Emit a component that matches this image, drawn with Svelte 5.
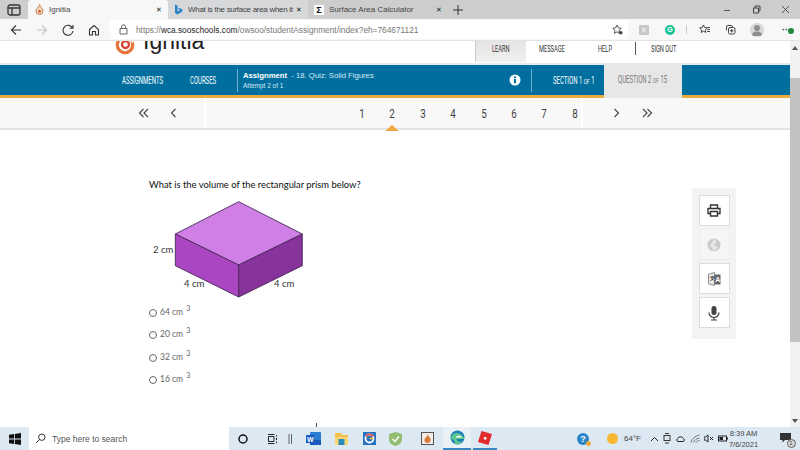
<script>
  const pages = [1, 2, 3, 4, 5, 6, 7, 8];
  const answers = ['64', '20', '32', '16'];
</script>

<div class="screen">
  <div class="tabbar">
    <div class="tabs-btn">
      <svg width="14" height="12" viewBox="0 0 14 12"><rect x="1" y="1" width="12" height="10" rx="2" fill="none" stroke="#333" stroke-width="1.3"/><path d="M1 4h12M5 4v7" stroke="#333" stroke-width="1.3"/></svg>
    </div>
    <div class="tab active">
      <svg width="9" height="11" viewBox="0 0 9 11"><path d="M4.500.5C5 3 8 4.500 8 7a3.500 3.500 0 0 1-7 0C1 5.500 2 5 2.500 3.500 3.500 4 4.500 2.500 4.500.5Z" fill="#f4d9c2" stroke="#c9844f" stroke-width="1"/><circle cx="4.500" cy="7.300" r="1.500" fill="#d9643a"/></svg>
      <span class="tab-title">Ignitia</span>
      <span class="close">✕</span>
    </div>
    <div class="tab second">
      <svg width="9" height="11" viewBox="0 0 9 11"><path d="M1 .5 3.500 1.500V7.500L6 6.300 4.700 5.500 4 3.700 8.300 5.200V7.500L3.500 10.500 1 9Z" fill="#2b83c6"/></svg>
      <span class="tab-title">What is the surface area when it</span>
      <span class="close">✕</span>
    </div>
    <div class="tab third">
      <span class="sigma">Σ</span>
      <span class="tab-title">Surface Area Calculator</span>
      <span class="close">✕</span>
    </div>
    <div class="plus">
      <svg width="10" height="10" viewBox="0 0 10 10"><path d="M5 0v10M0 5h10" stroke="#333" stroke-width="1"/></svg>
    </div>
    <div class="winctl">
      <svg width="8" height="8" viewBox="0 0 8 8"><path d="M1 4.500h6" stroke="#555"/></svg>
      <svg width="9" height="9" viewBox="0 0 9 9"><path d="M1.500 3h5v5h-5zM3 3V1h5v5H6.500" fill="none" stroke="#444"/></svg>
      <svg width="9" height="9" viewBox="0 0 9 9"><path d="M1 1l7 7M8 1l-7 7" stroke="#555"/></svg>
    </div>
  </div>

  <div class="toolbar">
    <div class="nav-icons">
      <svg width="12" height="12" viewBox="0 0 12 12"><path d="M11 6H1.500M6 1.500 1.500 6 6 10.500" fill="none" stroke="#333" stroke-width="1.100"/></svg>
      <svg width="12" height="12" viewBox="0 0 12 12"><path d="M1 6h9.500M6 1.500 10.500 6 6 10.500" fill="none" stroke="#c4c4c4" stroke-width="1.100"/></svg>
      <svg width="12" height="12" viewBox="0 0 12 12"><path d="M10.500 4A5 5 0 1 0 11 7M11 1v3.300H7.700" fill="none" stroke="#333" stroke-width="1.100"/></svg>
      <svg width="12" height="12" viewBox="0 0 12 12"><path d="M1.500 5.500 6 1.500l4.500 4V11H7.500V7.500h-3V11h-3Z" fill="none" stroke="#333" stroke-width="1.100"/></svg>
    </div>
    <div class="urlbox">
      <svg width="9" height="11" viewBox="0 0 9 11"><path d="M2.500 4V2.800a2 2 0 0 1 4 0V4M1 4.500h7v5.500H1z" fill="none" stroke="#666"/></svg>
      <span class="url">https://<b>wca.sooschools.com</b>/owsoo/studentAssignment/index?eh=764671121</span>
      <svg class="fav" width="11" height="11" viewBox="0 0 11 11"><path d="M5 1 6.300 3.800 9.300 4.200 7 6.300 7.600 9.300 5 7.800 2.400 9.300 3 6.300.8 4.200 3.700 3.800Z" fill="none" stroke="#444" stroke-width=".9"/><circle cx="8.800" cy="8.800" r="1.800" fill="#444"/></svg>
    </div>
    <div class="ext-icons">
      <span class="ext-k">k</span>
      <span class="ext-g">G</span>
      <span class="ext-sep"></span>
      <svg class="ext-star" width="11" height="11" viewBox="0 0 11 11"><path d="M4.500 1 5.700 3.600 8.300 4 6.400 5.800 6.900 8.500 4.500 7.100 2.100 8.500 2.600 5.800.7 4 3.300 3.600ZM8 3.500h3M8.500 5.500h2.500M8 7.500h3" fill="none" stroke="#333" stroke-width=".9"/></svg>
      <svg class="ext-coll" width="11" height="11" viewBox="0 0 11 11"><path d="M1.500 6.500V3A1.500 1.500 0 0 1 3 1.500h3A1.500 1.500 0 0 1 7.500 3M3.500 5a1.500 1.500 0 0 1 1.500-1.500h3.500A1.500 1.500 0 0 1 10 5v3.500A1.500 1.500 0 0 1 8.500 10H5A1.500 1.500 0 0 1 3.500 8.500ZM6.800 5v3.500M5 6.800h3.500" fill="none" stroke="#333" stroke-width=".9"/></svg>
      <span class="avatar">
        <svg width="14" height="14" viewBox="0 0 14 14"><circle cx="7" cy="5" r="3" fill="#8f8f8f"/><path d="M2 13c0-3.500 2-4.500 5-4.500s5 1 5 4.500Z" fill="#8f8f8f"/></svg>
      </span>
      <span class="more">···<i></i></span>
    </div>
  </div>

  <div class="page">
    <div class="content">
      <header class="top">
        <div class="logo">
          <svg width="20" height="20" viewBox="0 0 22 22"><circle cx="11" cy="11" r="8.500" fill="none" stroke="#e9743a" stroke-width="3.500"/><circle cx="11.500" cy="10.500" r="3.800" fill="none" stroke="#d9432f" stroke-width="2.500"/><path d="M13 4 20 2 20 9Z" fill="#fff"/></svg>
          <span>Ignitia</span>
        </div>
        <nav class="menu">
          <span class="learn"><span class="narrow">LEARN</span></span>
          <span class="narrow message">MESSAGE</span>
          <span class="narrow help">HELP</span>
          <span class="menu-sep"></span>
          <span class="narrow signout">SIGN OUT</span>
        </nav>
      </header>

      <div class="band">
        <div class="band-blue">
          <span class="narrow courses-a">ASSIGNMENTS</span>
          <span class="narrow courses-b">COURSES</span>
          <span class="band-sep first"></span>
          <div class="assign">
            <div class="assign-title"><b>Assignment</b>&nbsp; - 18. Quiz: Solid Figures</div>
            <div class="attempt">Attempt 2 of 1</div>
          </div>
          <svg class="info" width="12" height="12" viewBox="0 0 12 12"><circle cx="6" cy="6" r="5.500" fill="#fff"/><rect x="5" y="5" width="2" height="4.200" fill="#006fa0"/><rect x="5" y="2.500" width="2" height="1.600" fill="#006fa0"/></svg>
          <span class="band-sep second"></span>
          <span class="narrow section">SECTION 1 <small>OF</small> 1</span>
        </div>
        <div class="question"><span class="narrow">QUESTION 2 <small>OF</small> 15</span></div>
        <div class="band-end"></div>
      </div>

      <div class="pager">
        <div class="seg left">
          <svg width="12" height="10" viewBox="0 0 12 10"><path d="M5.500 1 1.500 5l4 4M10 1 6 5l4 4" fill="none" stroke="#444" stroke-width="1.100"/></svg>
          <svg width="7" height="10" viewBox="0 0 7 10"><path d="M5.500 1 1.500 5l4 4" fill="none" stroke="#444" stroke-width="1.100"/></svg>
        </div>
        <div class="seg middle">
          {#each pages as p}
            <span class="num narrow" class:current={p === 2}>{p}</span>
          {/each}
        </div>
        <div class="seg right">
          <svg width="7" height="10" viewBox="0 0 7 10"><path d="M1.500 1l4 4-4 4" fill="none" stroke="#444" stroke-width="1.100"/></svg>
          <svg width="12" height="10" viewBox="0 0 12 10"><path d="M2 1l4 4-4 4M6.500 1l4 4-4 4" fill="none" stroke="#444" stroke-width="1.100"/></svg>
        </div>
      </div>

      <div class="body">
        <main class="quiz">
          <p class="prompt">What is the volume of the rectangular prism below?</p>
          <svg class="prism" width="170" height="104" viewBox="150 197 170 104">
            <path d="M238.700 201.700 302.300 234 238.700 265 175.300 234Z" fill="#cf7fe6" stroke="#4a2a5a" stroke-width=".9"/>
            <path d="M175.300 234 238.700 265V297L175.300 265.700Z" fill="#ab46c2" stroke="#4a2a5a" stroke-width=".9"/>
            <path d="M238.700 265 302.300 234V265.700L238.700 297Z" fill="#87339b" stroke="#4a2a5a" stroke-width=".9"/>
            <text x="153" y="253">2 cm</text>
            <text x="184" y="287">4 cm</text>
            <text x="274" y="287">4 cm</text>
          </svg>
          <ul class="answers">
            {#each answers as a}
              <li><span class="radio"></span><span>{a} cm <sup>3</sup></span></li>
            {/each}
          </ul>
        </main>
        <aside class="tools">
          <div class="tool">
            <svg width="14" height="13" viewBox="0 0 14 13"><path d="M3.500 4V1h7v3M3.500 9.500H1V4.500h12v5h-2.500M3.500 7.500h7V12h-7Z" fill="#fff" stroke="#333" stroke-width="1.400"/></svg>
          </div>
          <div class="tool off">
            <svg width="14" height="14" viewBox="0 0 14 14"><circle cx="7" cy="7" r="6.500" fill="#c9c9c9"/><path d="M7 1c2 1 3 2 2.500 3.500S7 5.500 7.500 7s3 1 3.500 2.500C9 12 7 13 6 13 6 10 4 9 3 8 4 6 5 4 7 1Z" fill="#e6e6e6"/></svg>
          </div>
          <div class="tool">
            <svg width="13" height="16" viewBox="0 0 13 16"><path d="M.5 3 6.500 1.500v13L.5 13Z" fill="#e6e6e6" stroke="#777" stroke-width=".8"/><path d="M6.500 3.500h6v10h-6Z" fill="#666"/><text x="7.300" y="11" class="glyph">A</text><text x="1.500" y="9" class="glyph dark">文</text></svg>
          </div>
          <div class="tool">
            <svg width="12" height="16" viewBox="0 0 12 16"><rect x="3.500" y="1" width="5" height="9" rx="2.500" fill="#444"/><path d="M1 7.500a5 5 0 0 0 10 0M6 12.500V15M3 15h6" fill="none" stroke="#444" stroke-width="1.200"/></svg>
          </div>
        </aside>
      </div>
      <span class="tick"></span>
    </div>
    <div class="scrollbar">
      <svg width="6" height="4" viewBox="0 0 6 4"><path d="M3 0 6 4H0Z" fill="#555"/></svg>
      <span class="thumb"></span>
      <svg class="down" width="6" height="4" viewBox="0 0 6 4"><path d="M0 0H6L3 4Z" fill="#555"/></svg>
    </div>
  </div>

  <footer class="taskbar">
    <div class="start">
      <svg width="12" height="12" viewBox="0 0 12 12"><path d="M0 1.800 5 1v4.600H0ZM5.800.9 12 0v5.600H5.800ZM0 6.400h5V11l-5-.8ZM5.800 6.400H12V12l-6.200-.9Z" fill="#111"/></svg>
    </div>
    <div class="search">
      <svg width="11" height="11" viewBox="0 0 11 11"><circle cx="6.800" cy="4.200" r="3.200" fill="none" stroke="#333"/><path d="M4.500 6.500 1 10" stroke="#333"/></svg>
      <span>Type here to search</span>
    </div>
    <div class="apps">
      <svg width="10" height="10" viewBox="0 0 10 10"><circle cx="5" cy="5" r="4" fill="none" stroke="#111" stroke-width="1.500"/></svg>
      <svg class="a-view" width="11" height="10" viewBox="0 0 11 10"><path d="M1.500 2.500h5.500v5H1.500ZM1 .5h6.500M1 9.500h6.500M9.500 1v1.500M9.500 4v2M9.500 7.500V9" fill="none" stroke="#222"/></svg>
      <svg class="a-sep" width="5" height="10" viewBox="0 0 5 10"><path d="M1 0v10M3.500 0v10" stroke="#666"/></svg>
      <svg class="a-word" width="15" height="13" viewBox="0 0 15 13"><rect x="4" y="0" width="11" height="13" rx="1" fill="#2b7cd3"/><rect x="4" y="8" width="11" height="5" fill="#185abd"/><rect x="0" y="3" width="8" height="8" fill="#185abd"/><text x="1" y="9.500" class="glyph">W</text></svg>
      <svg class="a-folder" width="13" height="12" viewBox="0 0 13 12"><path d="M0 0h6l1.500 2H13v3H0Z" fill="#f5c04a"/><rect y="4" width="13" height="8" fill="#fbd774"/><rect x="3.500" y="6" width="6" height="6" fill="#2a8bb8"/></svg>
      <svg class="a-g" width="13" height="13" viewBox="0 0 13 13"><rect width="13" height="13" fill="#2672c0"/><circle cx="6.500" cy="6.500" r="4" fill="none" stroke="#fff" stroke-width="1.800"/><path d="M3 4.500A4 4 0 0 1 10 4.500" fill="none" stroke="#e2543e" stroke-width="1.800"/><path d="M6.500 6.500h4" stroke="#f6c445" stroke-width="1.500"/></svg>
      <svg class="a-shield" width="13" height="14" viewBox="0 0 13 14"><path d="M6.500 0 13 2v5c0 4-3 6-6.500 7C3 13 0 11 0 7V2Z" fill="#92bd72"/><path d="M3.500 7 6 9.500l4-5" fill="none" stroke="#fff" stroke-width="1.500"/></svg>
      <svg class="a-framed" width="13" height="13" viewBox="0 0 13 13"><rect x=".5" y=".5" width="12" height="12" fill="#f2ece4" stroke="#555"/><path d="M6.500 2c1 2.500 3 3.500 3 6a3 3 0 0 1-6 0c0-1.500 1-2 1.500-3 .7.300 1.500-1 1.500-3Z" fill="#d97a3c"/></svg>
      <span class="running edge">
        <svg width="15" height="15" viewBox="0 0 15 15"><circle cx="7.500" cy="7.500" r="7" fill="#1b7fb8"/><path d="M1 9C1 4 6 2 9 3.500c3 1.500 5 3.500 5.300 5.500H6.500c0 2.500 3.500 3.500 6 2.500-2 3-6 3.500-8 2C6 12 3 8.500 1 9Z" fill="#5cc98c"/><path d="M5.500 7.500c1-2.500 6-2.500 6.500 0Z" fill="#fff"/></svg>
      </span>
      <span class="running roblox">
        <svg width="14" height="14" viewBox="0 0 14 14"><path d="M3.500 0 14 3 10.500 14 0 11Z" fill="#e22c2c"/><rect x="6" y="6" width="2.500" height="2.500" fill="#fff" transform="rotate(15 7 7)"/></svg>
      </span>
    </div>
    <div class="tray">
      <span class="helpbadge">?<i></i></span>
      <span class="sun"></span>
      <span class="temp">64°F</span>
      <svg width="9" height="6" viewBox="0 0 9 6"><path d="M1 5 4.500 1.500 8 5" fill="none" stroke="#222"/></svg>
      <svg width="8" height="11" viewBox="0 0 8 11"><rect x="1" y="2.500" width="6" height="5" fill="none" stroke="#333"/><path d="M2 .5h4M2 10h4" stroke="#333"/></svg>
      <svg width="11" height="7" viewBox="0 0 11 7"><path d="M2.500 6.500a2 2 0 0 1 0-3 3.500 3.500 0 0 1 6 0 2 2 0 0 1 0 3Z" fill="none" stroke="#222"/></svg>
      <svg width="10" height="9" viewBox="0 0 10 9"><path d="M1 8.500C2 4.500 5 2 9.500 1M3.500 8.500C4.500 6 6.500 4.500 9.500 4M6 8.500c.5-1.200 2-2 3.500-2" fill="none" stroke="#777"/></svg>
      <svg width="10" height="9" viewBox="0 0 10 9"><path d="M0 3h1.500L4 1v7L1.500 6H0ZM6 3l3 3M9 3 6 6" fill="none" stroke="#222"/></svg>
      <svg width="10" height="7" viewBox="0 0 10 7"><rect x=".5" y="1" width="8" height="5" fill="none" stroke="#222"/><rect x="1.500" y="2" width="3.500" height="3" fill="#222"/><path d="M9.500 2.500v2" stroke="#222"/></svg>
      <div class="clock"><span>8:39 AM</span><span>7/6/2021</span></div>
      <span class="notif">
        <svg width="14" height="13" viewBox="0 0 14 13"><path d="M1 1h11v7H6L3.500 10.500V8H1Z" fill="#333"/></svg>
        <i>1</i>
      </span>
    </div>
  </footer>
</div>

<style>
  :global(body) {
    margin: 0;
    overflow: hidden;
  }
  .screen {
    width: 800px;
    height: 450px;
    display: flex;
    flex-direction: column;
    overflow: hidden;
    font-family: "Liberation Sans", Arial, sans-serif;
    background: #fff;
    color: #333;
  }

  /* condensed look, the box width is the width after scaling */
  .narrow {
    display: inline-block;
    flex: none;
    font-family: "Roboto", sans-serif;
    transform: scaleX(.6);
    transform-origin: 0 50%;
    white-space: nowrap;
  }
  .narrow small {
    font-size: .8em;
  }

  /* browser chrome */
  .tabbar {
    height: 19px;
    flex: none;
    display: flex;
    background: #cdcdcd;
    font-size: 8px;
  }
  .tabs-btn {
    width: 28px;
    display: flex;
    align-items: center;
    justify-content: center;
  }
  .tab {
    width: 140px;
    height: 19px;
    display: flex;
    align-items: center;
    box-sizing: border-box;
    color: #444;
    padding: 0 6px;
  }
  .tab.active {
    padding-left: 7px;
    background: #f7f7f7;
    border-radius: 3px 3px 0 0;
  }
  .tab.second {
    background: #d6d8da;
  }
  .tab.second .tab-title {
    letter-spacing: -.3px;
  }
  .tab-title {
    flex: 1;
    margin-left: 5px;
    white-space: nowrap;
    overflow: hidden;
  }
  .close {
    font-size: 7px;
    color: #222;
    margin-left: 2px;
  }
  .sigma {
    width: 10px;
    height: 10px;
    background: #fff;
    color: #111;
    font-size: 9px;
    font-weight: bold;
    line-height: 10px;
    text-align: center;
  }
  .plus {
    margin-left: 5px;
    display: flex;
    align-items: center;
  }
  .winctl {
    margin-left: auto;
    width: 67px;
    padding-right: 10px;
    display: flex;
    justify-content: space-between;
    align-items: center;
  }

  .toolbar {
    height: 22px;
    flex: none;
    display: flex;
    align-items: center;
    background: #f7f7f7;
    border-bottom: 1px solid #e2e2e2;
    box-sizing: border-box;
  }
  .nav-icons {
    width: 110px;
    padding: 0 10px;
    box-sizing: border-box;
    display: flex;
    justify-content: space-between;
  }
  .urlbox {
    flex: 1;
    height: 19px;
    background: #fff;
    border-radius: 3px;
    display: flex;
    align-items: center;
    padding: 0 5px 0 9px;
    box-sizing: border-box;
    font-size: 8.300px;
    color: #777;
  }
  .url {
    margin-left: 8px;
    flex: 1;
  }
  .url b {
    font-weight: normal;
    color: #222;
  }
  .ext-icons {
    width: 172px;
    flex: none;
    display: flex;
    align-items: center;
    padding-left: 11px;
    box-sizing: border-box;
  }
  .ext-k {
    width: 10px;
    height: 10px;
    background: #c8c8c8;
    color: #eee;
    font-size: 7px;
    font-weight: bold;
    line-height: 10px;
    text-align: center;
  }
  .ext-g {
    width: 10px;
    height: 10px;
    margin-left: 16px;
    background: #15c39a;
    border-radius: 50%;
    color: #fff;
    font-size: 7px;
    font-weight: bold;
    line-height: 10px;
    text-align: center;
  }
  .ext-sep {
    width: 1px;
    height: 9px;
    margin-left: 11px;
    background: #c8c8c8;
  }
  .ext-star {
    margin-left: 12px;
  }
  .ext-coll {
    margin-left: 15px;
  }
  .avatar {
    width: 14px;
    height: 14px;
    margin-left: 14px;
    border-radius: 50%;
    background: #d8d8d8;
    overflow: hidden;
  }
  .more {
    position: relative;
    margin-left: 18px;
    font-size: 9px;
    font-weight: bold;
    color: #333;
  }
  .more i {
    position: absolute;
    right: -3px;
    top: 3px;
    width: 6px;
    height: 6px;
    border-radius: 50%;
    background: #1f8a3b;
  }

  /* page */
  .page {
    height: 386px;
    flex: none;
    display: flex;
    overflow: hidden;
  }
  .content {
    position: relative;
    width: 790px;
    flex: none;
    display: flex;
    flex-direction: column;
  }
  .scrollbar {
    flex: 1;
    background: #f1f1f1;
    display: flex;
    flex-direction: column;
    align-items: center;
    padding: 5px 0 4px;
    box-sizing: border-box;
  }
  .thumb {
    width: 10px;
    height: 264px;
    margin-top: 28px;
    background: #c2c2c2;
  }
  .down {
    margin-top: auto;
  }
  .top {
    height: 22px;
    flex: none;
    display: flex;
    justify-content: space-between;
    padding-left: 115px;
    overflow: hidden;
    border-bottom: 2px solid #e4eaee;
  }
  .logo {
    display: flex;
    align-items: center;
    height: 22px;
    margin-top: -11px;
    font-size: 23px;
    color: #222;
  }
  .logo svg {
    margin-top: 7px;
  }
  .logo span {
    margin-left: 8px;
  }
  .menu {
    width: 315px;
    display: flex;
    align-items: flex-start;
    padding-top: 1px;
    font-size: 9.500px;
    line-height: 14px;
    color: #333;
  }
  .learn {
    width: 51px;
    height: 21px;
    flex: none;
    margin-top: -1px;
    padding: 1px 0 0 16px;
    background: linear-gradient(#e4e4e4, #f0f0f0);
    border-left: 1px solid #ccc;
    box-sizing: border-box;
  }
  .message {
    width: 26px;
    margin-left: 13px;
  }
  .help {
    width: 13px;
    margin-left: 33px;
  }
  .menu-sep {
    width: 1px;
    height: 13px;
    background: #555;
    margin-left: 24px;
  }
  .signout {
    width: 26px;
    margin-left: 15px;
  }

  .band {
    height: 33px;
    flex: none;
    display: flex;
  }
  .band-blue {
    width: 604px;
    flex: none;
    display: flex;
    align-items: center;
    background: #006fa0;
    border-bottom: 3px solid #e8ad3c;
    box-sizing: border-box;
    color: #fff;
  }
  .courses-a {
    width: 40px;
    margin-left: 122px;
    font-size: 10px;
  }
  .courses-b {
    width: 28px;
    margin-left: 28px;
    font-size: 10px;
  }
  .band-sep {
    width: 1px;
    height: 23px;
    background: #6fb0cf;
  }
  .band-sep.first {
    margin-left: 19px;
  }
  .assign {
    margin-left: 5px;
    width: 266px;
    flex: none;
  }
  .assign-title {
    font-size: 7.700px;
    color: #d8eaf3;
  }
  .assign-title b {
    color: #fff;
  }
  .attempt {
    margin-top: 2px;
    font-size: 6.500px;
    color: #d8eaf3;
  }
  .band-sep.second {
    margin-left: 10px;
  }
  .section {
    width: 39px;
    margin-left: 21px;
    font-size: 10px;
  }
  .info {
    flex: none;
  }
  .question {
    width: 78px;
    flex: none;
    padding-left: 13.500px;
    box-sizing: border-box;
    background: #e7e7e7;
    color: #777;
    font-size: 10px;
    line-height: 30px;
  }
  .band-end {
    flex: 1;
    background: #006fa0;
    border-bottom: 3px solid #e8ad3c;
  }

  .pager {
    height: 32px;
    flex: none;
    display: flex;
    gap: 2px;
    border-bottom: 2px solid #e4e4e4;
    box-sizing: border-box;
  }
  .seg {
    background: #f8f8f8;
    display: flex;
    align-items: center;
  }
  .seg.left {
    width: 204px;
    padding-left: 138px;
    box-sizing: border-box;
    gap: 20px;
  }
  .seg.middle {
    width: 375px;
    padding-left: 150px;
    box-sizing: border-box;
    gap: 18.400px;
  }
  .seg.right {
    flex: 1;
    padding-left: 30px;
    gap: 21px;
  }
  .num {
    position: relative;
    width: 12px;
    font-size: 13px;
    text-align: center;
    color: #444;
    transform: scaleX(.75);
    transform-origin: 50% 50%;
  }
  .num.current::after {
    content: "";
    position: absolute;
    left: 50%;
    bottom: -10px;
    margin-left: -9px;
    border-left: 9px solid transparent;
    border-right: 9px solid transparent;
    border-bottom: 6px solid #e8a93a;
  }

  .body {
    flex: 1;
    display: flex;
  }
  .quiz {
    width: 692px;
    flex: none;
    padding: 49px 0 0 149px;
    box-sizing: border-box;
    font-family: "Lato", sans-serif;
  }
  .prompt {
    margin: 0;
    font-size: 9.400px;
    color: #111;
    line-height: 12px;
  }
  .prism {
    display: block;
    margin-top: 6px;
    margin-left: 1px;
  }
  .prism text {
    font-size: 9.500px;
    fill: #333;
  }
  .glyph {
    font-size: 7px;
    font-weight: bold;
    fill: #fff;
  }
  .glyph.dark {
    font-size: 5px;
    fill: #333;
  }
  .answers {
    list-style: none;
    margin: -2px 0 0;
    padding: 0;
  }
  .answers li {
    height: 22.500px;
    display: flex;
    align-items: center;
    font-size: 8.500px;
    color: #666;
  }
  .answers sup {
    font-size: 7px;
    margin-left: 1px;
  }
  .radio {
    width: 6px;
    height: 6px;
    border: 1px solid #666;
    border-radius: 50%;
    margin: 5px 3px 0 0;
    background: #fff;
  }

  .tools {
    width: 44px;
    height: 151px;
    margin-top: 58px;
    padding: 7px;
    box-sizing: border-box;
    background: #f3f3f3;
    display: flex;
    flex-direction: column;
    gap: 3px;
    align-items: center;
  }
  .tool {
    width: 31px;
    height: 31px;
    flex: none;
    background: #fff;
    border: 1px solid #dcdcdc;
    box-sizing: border-box;
    display: flex;
    align-items: center;
    justify-content: center;
  }
  .tool.off {
    background: #f5f5f5;
    border-color: #eeeeee;
  }
  .tick {
    position: absolute;
    left: 316px;
    top: 382px;
    width: 1px;
    height: 4px;
    background: #555;
  }

  /* taskbar */
  .taskbar {
    flex: 1;
    display: flex;
    align-items: center;
    background: #dce8f2;
  }
  .start {
    width: 29px;
    flex: none;
    display: flex;
    justify-content: center;
  }
  .search {
    width: 200px;
    height: 23px;
    flex: none;
    padding-left: 6px;
    box-sizing: border-box;
    display: flex;
    align-items: center;
    gap: 6px;
    background: #fff;
    font-size: 8.500px;
    color: #555;
  }
  .apps {
    display: flex;
    align-items: center;
    margin-left: 9px;
    width: 270px;
    flex: none;
    height: 23px;
  }
  .apps > * {
    flex: none;
  }
  .a-view {
    margin-left: 19px;
  }
  .a-sep {
    margin-left: 10px;
  }
  .a-word {
    margin-left: 13px;
  }
  .a-folder {
    margin-left: 14px;
  }
  .a-g {
    margin-left: 15px;
  }
  .a-shield {
    margin-left: 13px;
  }
  .a-framed {
    margin-left: 19px;
  }
  .running {
    width: 28px;
    height: 23px;
    display: flex;
    align-items: center;
    justify-content: center;
    border-bottom: 2px solid #3a85c4;
    box-sizing: border-box;
  }
  .edge {
    margin-left: 9px;
    background: #e9f1f7;
  }
  .roblox {
    width: 24px;
    margin-left: 2px;
  }
  .tray {
    flex: 1;
    display: flex;
    align-items: center;
    gap: 4px;
    padding-left: 69px;
    font-size: 8px;
    color: #444;
  }
  .tray > * {
    flex: none;
  }
  .helpbadge {
    position: relative;
    width: 12px;
    height: 12px;
    border-radius: 50%;
    background: #2a86c8;
    color: #fff;
    font-weight: bold;
    text-align: center;
    line-height: 12px;
    font-size: 9px;
  }
  .helpbadge i {
    position: absolute;
    right: -2px;
    bottom: -1px;
    width: 5px;
    height: 5px;
    border-radius: 50%;
    background: #eda93a;
  }
  .sun {
    width: 11px;
    height: 11px;
    margin-left: 13.500px;
    border-radius: 50%;
    background: #f7b733;
  }
  .temp {
    width: 16px;
    margin: 0 5.500px 0 2.500px;
    white-space: nowrap;
  }
  .clock {
    width: 30px;
    display: flex;
    flex-direction: column;
    gap: 2px;
    align-items: center;
    font-size: 7.500px;
    white-space: nowrap;
    margin-left: -3px;
  }
  .notif {
    position: relative;
    margin-left: 16px;
    width: 14px;
    height: 13px;
  }
  .notif i {
    position: absolute;
    right: -3px;
    bottom: -3px;
    width: 9px;
    height: 9px;
    border-radius: 50%;
    background: #d5d5d5;
    border: 1px solid #666;
    box-sizing: border-box;
    font-size: 6px;
    font-style: normal;
    line-height: 7px;
    text-align: center;
  }
</style>
